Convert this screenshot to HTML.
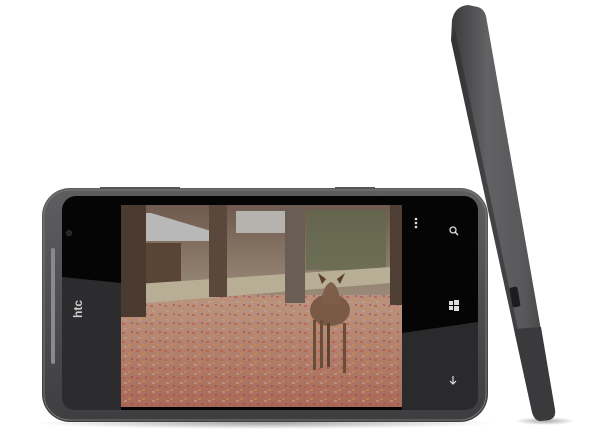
<!DOCTYPE html>
<html><head><style>
html,body{margin:0;padding:0;background:#fff;width:600px;height:439px;overflow:hidden;position:relative}
</style></head><body>
<svg width="600" height="439" viewBox="0 0 600 439" style="position:absolute;left:0;top:0">
<defs>
<linearGradient id="side" x1="0" y1="0" x2="1" y2="0">
<stop offset="0" stop-color="#3a3a3c"/><stop offset="0.35" stop-color="#626264"/><stop offset="0.7" stop-color="#58585a"/><stop offset="1" stop-color="#3c3c3e"/>
</linearGradient>
<linearGradient id="body" x1="0" y1="0" x2="0" y2="1">
<stop offset="0" stop-color="#5e5e60"/><stop offset="1" stop-color="#3e3e40"/>
</linearGradient>
<linearGradient id="ground" x1="0" y1="0" x2="0" y2="1">
<stop offset="0" stop-color="#b08478"/><stop offset="0.5" stop-color="#b8927e"/><stop offset="1" stop-color="#a86a58"/>
</linearGradient>
<linearGradient id="bg" x1="0" y1="0" x2="0" y2="1">
<stop offset="0" stop-color="#6e5a4e"/><stop offset="1" stop-color="#9a8a78"/>
</linearGradient>
<pattern id="leaves" width="14" height="9" patternUnits="userSpaceOnUse">
<rect x="1" y="1" width="3" height="2" fill="#c0503e" opacity="0.6"/>
<rect x="7" y="4" width="3" height="2" fill="#d08a4a" opacity="0.6"/>
<rect x="10" y="0" width="2" height="2" fill="#9c3c4a" opacity="0.5"/>
<rect x="3" y="6" width="3" height="2" fill="#c8a090" opacity="0.6"/>
</pattern>
<radialGradient id="shadow" cx="0.5" cy="0.5" r="0.5"><stop offset="0" stop-color="#000" stop-opacity="0.35"/><stop offset="1" stop-color="#000" stop-opacity="0"/></radialGradient>
</defs>
<ellipse cx="265" cy="423" rx="230" ry="6" fill="url(#shadow)"/>
<ellipse cx="545" cy="421" rx="30" ry="4" fill="url(#shadow)"/>
<!-- side phone -->
<path d="M452,20 Q455,6 468,5 L478,7 Q484,9 486,16 L555,410 Q556,418 549,420 L540,421 Q534,420 532,412 L451,40 Z" fill="url(#side)"/>
<path d="M451,40 L532,412 L537,420 L455,30 Z" fill="#2e2e30" opacity="0.6"/>
<path d="M514,329 L541,327 L555,410 Q556,418 549,420 L540,421 Q534,420 532,412 Z" fill="#3a3a3c"/>
<rect x="511" y="287" width="8" height="20" rx="2" fill="#1c1c1e" transform="rotate(-10 515 297)"/>
<!-- landscape phone -->
<rect x="42" y="188" width="446" height="234" rx="28" fill="url(#body)"/>
<rect x="44" y="190" width="442" height="230" rx="26" fill="none" stroke="#777" stroke-width="1"/>
<rect x="100" y="187" width="80" height="2" fill="#555"/>
<rect x="335" y="187" width="40" height="2" fill="#555"/>
<rect x="62" y="196" width="416" height="214" rx="14" fill="#050505"/>
<path d="M62,277 L121,283 L121,410 L76,410 Q62,410 62,396 Z" fill="#2c2c2e"/>
<path d="M402,333 L478,322 L478,396 Q478,410 464,410 L402,410 Z" fill="#2a2a2c"/>
<rect x="51" y="248" width="4" height="116" rx="2" fill="#8a8a8c"/>
<circle cx="69" cy="233" r="2.5" fill="#222" stroke="#333"/>
<text x="0" y="0" transform="translate(82,318) rotate(-90)" font-family="Liberation Sans, sans-serif" font-size="12" font-weight="bold" fill="#ccc">htc</text>
<!-- photo -->
<svg x="121" y="205" width="281" height="202" viewBox="0 0 281 202">
<rect width="281" height="202" fill="url(#ground)"/>
<rect y="88" width="281" height="114" fill="url(#leaves)"/>
<rect width="281" height="90" fill="url(#bg)"/>
<path d="M0,8 L30,8 L90,26 L90,36 L0,36 Z" fill="#b8b8b8"/>
<rect x="20" y="38" width="40" height="50" fill="#5a4436"/>
<path d="M115,6 L165,6 L165,28 L115,28 Z" fill="#b6b2ae"/>
<rect x="185" y="5" width="80" height="60" fill="#5f6a4c" opacity="0.7"/>
<path d="M0,80 L270,62 L270,78 L0,100 Z" fill="#b8ae96"/>
<rect x="0" y="0" width="25" height="112" fill="#4a3a30"/>
<rect x="88" y="0" width="18" height="92" fill="#5a483c"/>
<rect x="164" y="0" width="20" height="98" fill="#6a5e54"/>
<rect x="269" y="0" width="12" height="100" fill="#4e3e34"/>
<!-- deer -->
<ellipse cx="209" cy="105" rx="20" ry="16" fill="#7a5a44"/>
<path d="M200,98 Q202,80 210,77 Q218,80 220,100 Z" fill="#7e5e48"/>
<path d="M201,79 L197,68 L205,74 Z M219,79 L224,68 L216,74 Z" fill="#5a3e2e"/>
<rect x="192" y="115" width="3" height="50" fill="#6a4c3a"/>
<rect x="199" y="115" width="3" height="48" fill="#6a4c3a"/>
<rect x="206" y="118" width="3" height="44" fill="#5e4434"/>
<rect x="222" y="118" width="3" height="50" fill="#6a4c3a"/>
</svg>
<!-- right panel icons -->
<circle cx="416" cy="219" r="1.3" fill="#ddd"/><circle cx="416" cy="223" r="1.3" fill="#ddd"/><circle cx="416" cy="227" r="1.3" fill="#ddd"/>
<circle cx="453" cy="230" r="3" fill="none" stroke="#ddd" stroke-width="1.3"/><line x1="455" y1="232" x2="458" y2="235" stroke="#ddd" stroke-width="1.5"/>
<g fill="#ddd"><rect x="449" y="301" width="4" height="4"/><rect x="454" y="300" width="5" height="5"/><rect x="449" y="306" width="4" height="4"/><rect x="454" y="306" width="5" height="5"/></g>
<path d="M453,376 L453,384 M450,381 L453,384 L456,381" stroke="#ddd" stroke-width="1.2" fill="none"/>
</svg>
</body></html>
